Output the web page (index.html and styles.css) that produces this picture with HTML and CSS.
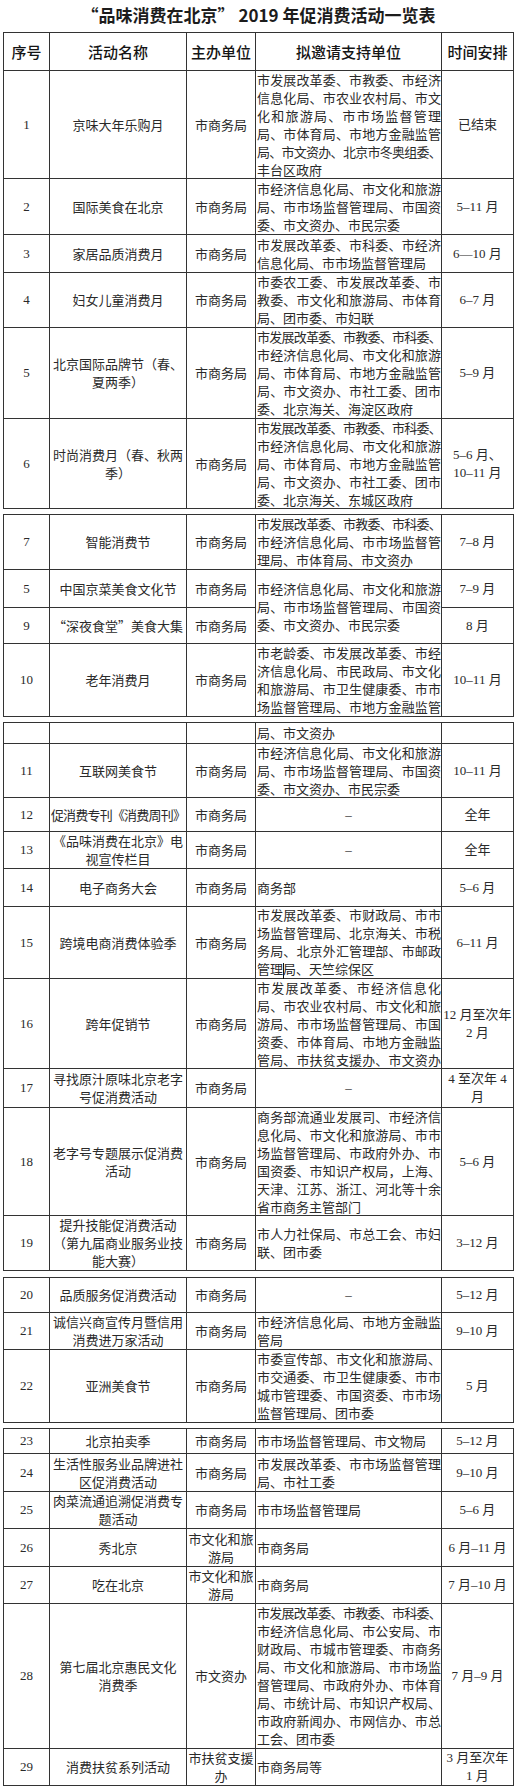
FILE: index.html
```html
<!DOCTYPE html>
<html lang="zh-CN">
<head>
<meta charset="utf-8">
<title>“品味消费在北京”2019年促消费活动一览表</title>
<link rel="stylesheet" href="styles.css">
</head>
<body>
<div class="page">
  <h1 class="title">“品味消费在北京” 2019 年促消费活动一览表</h1>

  <div class="seg s1">
    <div class="c h">序号</div><div class="c h">活动名称</div><div class="c h">主办单位</div><div class="c h">拟邀请支持单位</div><div class="c h">时间安排</div>

    <div class="c n">1</div><div class="c">京味大年乐购月</div><div class="c">市商务局</div>
    <div class="c d"><div class="ls"><p class="j">市发展改革委、市教委、市经济</p><p class="j">信息化局、市农业农村局、市文</p><p class="j">化和旅游局、市市场监督管理</p><p class="j">局、市体育局、市地方金融监管</p><p class="j k">局、市文资办、北京市冬奥组委、</p><p>丰台区政府</p></div></div>
    <div class="c t">已结束</div>

    <div class="c n">2</div><div class="c">国际美食在北京</div><div class="c">市商务局</div>
    <div class="c d"><div class="ls"><p class="j">市经济信息化局、市文化和旅游</p><p class="j">局、市市场监督管理局、市国资</p><p>委、市文资办、市民宗委</p></div></div>
    <div class="c t">5–11 月</div>

    <div class="c n">3</div><div class="c">家居品质消费月</div><div class="c">市商务局</div>
    <div class="c d"><div class="ls"><p class="j">市发展改革委、市科委、市经济</p><p>信息化局、市市场监督管理局</p></div></div>
    <div class="c t">6—10 月</div>

    <div class="c n">4</div><div class="c">妇女儿童消费月</div><div class="c">市商务局</div>
    <div class="c d"><div class="ls"><p class="j">市委农工委、市发展改革委、市</p><p class="j">教委、市文化和旅游局、市体育</p><p>局、团市委、市妇联</p></div></div>
    <div class="c t">6–7 月</div>

    <div class="c n">5</div><div class="c">北京国际品牌节（春、<br>夏两季）</div><div class="c">市商务局</div>
    <div class="c d"><div class="ls"><p class="j k">市发展改革委、市教委、市科委、</p><p class="j">市经济信息化局、市文化和旅游</p><p class="j">局、市体育局、市地方金融监管</p><p class="j">局、市文资办、市社工委、团市</p><p>委、北京海关、海淀区政府</p></div></div>
    <div class="c t">5–9 月</div>

    <div class="c n">6</div><div class="c">时尚消费月（春、秋两<br>季）</div><div class="c">市商务局</div>
    <div class="c d"><div class="ls"><p class="j k">市发展改革委、市教委、市科委、</p><p class="j">市经济信息化局、市文化和旅游</p><p class="j">局、市体育局、市地方金融监管</p><p class="j">局、市文资办、市社工委、团市</p><p>委、北京海关、东城区政府</p></div></div>
    <div class="c t">5–6 月、<br>10–11 月</div>
  </div>

  <div class="seg s2">
    <div class="c n">7</div><div class="c">智能消费节</div><div class="c">市商务局</div>
    <div class="c d"><div class="ls"><p class="j k">市发展改革委、市教委、市科委、</p><p class="j">市经济信息化局、市市场监督管</p><p>理局、市体育局、市文资办</p></div></div>
    <div class="c t">7–8 月</div>

    <div class="c n">5</div><div class="c">中国京菜美食文化节</div><div class="c">市商务局</div>
    <div class="c d span2"><div class="ls"><p class="j">市经济信息化局、市文化和旅游</p><p class="j">局、市市场监督管理局、市国资</p><p>委、市文资办、市民宗委</p></div></div>
    <div class="c t">7–9 月</div>

    <div class="c n">9</div><div class="c">“深夜食堂”美食大集</div><div class="c">市商务局</div>
    <div class="c t">8 月</div>

    <div class="c n">10</div><div class="c">老年消费月</div><div class="c">市商务局</div>
    <div class="c d"><div class="ls"><p class="j">市老龄委、市发展改革委、市经</p><p class="j">济信息化局、市民政局、市文化</p><p class="j">和旅游局、市卫生健康委、市市</p><p class="j">场监督管理局、市地方金融监管</p></div></div>
    <div class="c t">10–11 月</div>
  </div>

  <div class="seg s3">
    <div class="c n"></div><div class="c"></div><div class="c"></div>
    <div class="c d"><div class="ls"><p>局、市文资办</p></div></div>
    <div class="c t"></div>

    <div class="c n">11</div><div class="c">互联网美食节</div><div class="c">市商务局</div>
    <div class="c d"><div class="ls"><p class="j">市经济信息化局、市文化和旅游</p><p class="j">局、市市场监督管理局、市国资</p><p>委、市文资办、市民宗委</p></div></div>
    <div class="c t">10–11 月</div>

    <div class="c n">12</div><div class="c k">促消费专刊《消费周刊》</div><div class="c">市商务局</div>
    <div class="c dash">–</div>
    <div class="c t">全年</div>

    <div class="c n">13</div><div class="c">《品味消费在北京》电<br>视宣传栏目</div><div class="c">市商务局</div>
    <div class="c dash">–</div>
    <div class="c t">全年</div>

    <div class="c n">14</div><div class="c">电子商务大会</div><div class="c">市商务局</div>
    <div class="c d"><div class="ls"><p>商务部</p></div></div>
    <div class="c t">5–6 月</div>

    <div class="c n">15</div><div class="c">跨境电商消费体验季</div><div class="c">市商务局</div>
    <div class="c d"><div class="ls"><p class="j">市发展改革委、市财政局、市市</p><p class="j">场监督管理局、北京海关、市税</p><p class="j">务局、北京外汇管理部、市邮政</p><p>管理<span class="caret"></span>局、天竺综保区</p></div></div>
    <div class="c t">6–11 月</div>

    <div class="c n">16</div><div class="c">跨年促销节</div><div class="c">市商务局</div>
    <div class="c d"><div class="ls"><p class="j">市发展改革委、市经济信息化</p><p class="j">局、市农业农村局、市文化和旅</p><p class="j">游局、市市场监督管理局、市国</p><p class="j">资委、市体育局、市地方金融监</p><p class="j">管局、市扶贫支援办、市文资办</p></div></div>
    <div class="c t">12 月至次年<br>2 月</div>

    <div class="c n">17</div><div class="c">寻找原汁原味北京老字<br>号促消费活动</div><div class="c">市商务局</div>
    <div class="c dash">–</div>
    <div class="c t">4 至次年 4<br>月</div>

    <div class="c n">18</div><div class="c">老字号专题展示促消费<br>活动</div><div class="c">市商务局</div>
    <div class="c d"><div class="ls"><p class="j">商务部流通业发展司、市经济信</p><p class="j">息化局、市文化和旅游局、市市</p><p class="j">场监督管理局、市政府外办、市</p><p class="j">国资委、市知识产权局，上海、</p><p class="j">天津、江苏、浙江、河北等十余</p><p>省市商务主管部门</p></div></div>
    <div class="c t">5–6 月</div>

    <div class="c n">19</div><div class="c">提升技能促消费活动<br>（第九届商业服务业技<br>能大赛）</div><div class="c">市商务局</div>
    <div class="c d"><div class="ls"><p class="j">市人力社保局、市总工会、市妇</p><p>联、团市委</p></div></div>
    <div class="c t">3–12 月</div>
  </div>

  <div class="seg s4">
    <div class="c n">20</div><div class="c">品质服务促消费活动</div><div class="c">市商务局</div>
    <div class="c dash">–</div>
    <div class="c t">5–12 月</div>

    <div class="c n">21</div><div class="c">诚信兴商宣传月暨信用<br>消费进万家活动</div><div class="c">市商务局</div>
    <div class="c d"><div class="ls"><p class="j">市经济信息化局、市地方金融监</p><p>管局</p></div></div>
    <div class="c t">9–10 月</div>

    <div class="c n">22</div><div class="c">亚洲美食节</div><div class="c">市商务局</div>
    <div class="c d"><div class="ls"><p class="j">市委宣传部、市文化和旅游局、</p><p class="j">市交通委、市卫生健康委、市市</p><p class="j">城市管理委、市国资委、市市场</p><p>监督管理局、团市委</p></div></div>
    <div class="c t">5 月</div>
  </div>

  <div class="seg s5">
    <div class="c n">23</div><div class="c">北京拍卖季</div><div class="c">市商务局</div>
    <div class="c d"><div class="ls"><p>市市场监督管理局、市文物局</p></div></div>
    <div class="c t">5–12 月</div>

    <div class="c n">24</div><div class="c">生活性服务业品牌进社<br>区促消费活动</div><div class="c">市商务局</div>
    <div class="c d"><div class="ls"><p class="j">市发展改革委、市市场监督管理</p><p>局、市社工委</p></div></div>
    <div class="c t">9–10 月</div>

    <div class="c n">25</div><div class="c">肉菜流通追溯促消费专<br>题活动</div><div class="c">市商务局</div>
    <div class="c d"><div class="ls"><p>市市场监督管理局</p></div></div>
    <div class="c t">5–6 月</div>

    <div class="c n">26</div><div class="c">秀北京</div><div class="c">市文化和旅<br>游局</div>
    <div class="c d"><div class="ls"><p>市商务局</p></div></div>
    <div class="c t">6 月–11 月</div>

    <div class="c n">27</div><div class="c">吃在北京</div><div class="c">市文化和旅<br>游局</div>
    <div class="c d"><div class="ls"><p>市商务局</p></div></div>
    <div class="c t">7 月–10 月</div>

    <div class="c n">28</div><div class="c">第七届北京惠民文化<br>消费季</div><div class="c">市文资办</div>
    <div class="c d"><div class="ls"><p class="j k">市发展改革委、市教委、市科委、</p><p class="j">市经济信息化局、市公安局、市</p><p class="j">财政局、市城市管理委、市商务</p><p class="j">局、市文化和旅游局、市市场监</p><p class="j">督管理局、市政府外办、市体育</p><p class="j">局、市统计局、市知识产权局、</p><p class="j">市政府新闻办、市网信办、市总</p><p>工会、团市委</p></div></div>
    <div class="c t">7 月–9 月</div>

    <div class="c n">29</div><div class="c">消费扶贫系列活动</div><div class="c">市扶贫支援<br>办</div>
    <div class="c d"><div class="ls"><p>市商务局等</p></div></div>
    <div class="c t">3 月至次年<br>1 月</div>
  </div>
</div>
</body>
</html>
```

FILE: styles.css
```css
* {
  box-sizing: border-box;
  margin: 0;
  padding: 0;
}

html, body {
  background: #ffffff;
}

body {
  color: #2a2a2a;
  font-family: "Noto Sans CJK SC", "Noto Sans", sans-serif;
  font-size: 13px;
}

.page {
  width: 516px;
  padding: 0 2px 0 3px;
}

.title {
  height: 32px;
  line-height: 30px;
  text-align: center;
  font-size: 17px;
  font-weight: 700;
  color: #1c1c1c;
  white-space: nowrap;
}

.seg {
  display: grid;
  width: 511px;
  grid-template-columns: 46px 137px 69px 186px 72px;
  border-top: 1px solid #333;
  border-left: 1px solid #333;
  margin-top: 5px;
}

.s1 {
  margin-top: 0;
  grid-template-rows: 38px 108px 56px 38px 55px 91px 90px;
}

.s2 {
  grid-template-rows: 55px 38px 36px 73px;
}

.s3 {
  grid-template-rows: 21px 54px 34px 37px 38px 72px 90px 39px 108px 55px;
}

.s4 {
  margin-top: 6px;
  grid-template-rows: 35px 37px 73px;
}

.s5 {
  grid-template-rows: 25px 38px 37px 38px 37px 145px 37px;
}

.c {
  display: flex;
  align-items: center;
  justify-content: center;
  text-align: center;
  line-height: 18px;
  white-space: nowrap;
  border-right: 1px solid #333;
  border-bottom: 1px solid #333;
  overflow: visible;
}

.h {
  font-size: 15px;
  font-weight: 500;
  color: #151515;
}

.n,
.t,
.dash {
  font-family: "Liberation Serif", "Noto Sans CJK SC", serif;
}

.t {
  font-size: 13px;
}

.d {
  justify-content: flex-start;
  text-align: left;
  padding: 0 0 0 1px;
  white-space: normal;
}

.span2 {
  grid-row: span 2;
}

.ls {
  width: 184px;
}

.ls p {
  line-height: 18px;
}

.j {
  text-align: justify;
  text-align-last: justify;
}

.k {
  letter-spacing: -0.8px;
}

.caret {
  display: inline-block;
  width: 1px;
  height: 16px;
  margin-right: -1px;
  background: #111;
  vertical-align: middle;
}
```
